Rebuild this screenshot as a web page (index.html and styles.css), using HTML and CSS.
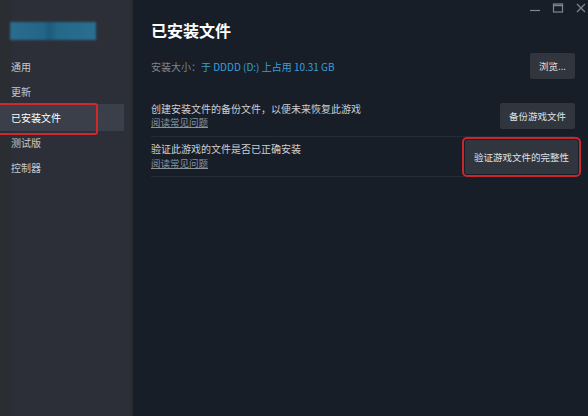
FILE: index.html
```html
<!DOCTYPE html>
<html lang="zh-CN">
<head>
<meta charset="utf-8">
<link rel="stylesheet" href="styles.css">
</head>
<body>
<div class="app">
  <aside class="sidebar">
    <div class="logo"></div>
    <nav class="nav">
      <div class="nav-item">通用</div>
      <div class="nav-item">更新</div>
      <div class="nav-item active">已安装文件</div>
      <div class="nav-item">测试版</div>
      <div class="nav-item">控制器</div>
    </nav>
  </aside>
  <main class="main">
    <div class="titlebar">
      <svg class="wc" width="12" height="12" viewBox="0 0 12 12"><path d="M1 8.5H11" stroke="#7f8690" stroke-width="1.2"/></svg>
      <svg class="wc" width="12" height="12" viewBox="0 0 12 12"><rect x="1.5" y="2" width="9" height="8" fill="none" stroke="#7f8690" stroke-width="1.2"/><path d="M1.5 3.5H10.5" stroke="#7f8690" stroke-width="1.4"/></svg>
      <svg class="wc" width="12" height="12" viewBox="0 0 12 12"><path d="M2 2L10 10M10 2L2 10" stroke="#7f8690" stroke-width="1.2"/></svg>
    </div>
    <h1 class="title">已安装文件</h1>
    <div class="size-row">
      <div class="size-text"><span class="label">安装大小：</span><span class="value">于 DDDD (D:) 上占用 10.31 GB</span></div>
      <button class="btn">浏览...</button>
    </div>
    <div class="row row-backup">
      <div class="row-text">
        <div class="desc">创建安装文件的备份文件，以便未来恢复此游戏</div>
        <div class="link">阅读常见问题</div>
      </div>
      <button class="btn">备份游戏文件</button>
    </div>
    <div class="row row-verify">
      <div class="row-text">
        <div class="desc">验证此游戏的文件是否已正确安装</div>
        <div class="link">阅读常见问题</div>
      </div>
      <button class="btn btn-big">验证游戏文件的完整性</button>
    </div>
  </main>
</div>
</body>
</html>
```
FILE: styles.css
```css
* { box-sizing: border-box; }
html, body { margin: 0; padding: 0; }
body {
  width: 588px;
  height: 416px;
  overflow: hidden;
  font-family: "Noto Sans CJK SC", "Noto Sans", sans-serif;
  background: #181e28;
}
.app {
  display: flex;
  width: 588px;
  height: 416px;
}
.sidebar {
  width: 133px;
  flex: none;
  background: linear-gradient(to right, #2a2d32 0, #2a2d32 12px, #2c2f38 12px, #2c2f38 131px, #262a31 131px);
  padding-top: 22px;
}
.logo {
  margin-left: 10px;
  width: 86px;
  height: 18px;
  background: linear-gradient(to right, #2a6d8e 0%, #226586 40%, #1c5a78 45%, #24688a 55%, #2a6f90 100%);
  filter: blur(0.8px);
}
.nav {
  margin-top: 14px;
  display: flex;
  flex-direction: column;
}
.nav-item {
  height: 25.3px;
  display: flex;
  align-items: center;
  padding-left: 11px;
  font-size: 10px;
  color: #c3c8ce;
  width: 124px;
}
.nav-item.active {
  position: relative;
  background: #3b3f49;
  color: #ffffff;
  height: 27px;
  margin: -1px 0;
}
.nav-item.active::after {
  content: "";
  position: absolute;
  left: -3px;
  top: -1px;
  width: 97px;
  height: 28px;
  border: 2px solid #d0282c;
  border-radius: 3px;
}
.main {
  flex: 1;
  padding: 0 13px 0 18px;
  display: flex;
  flex-direction: column;
}
.titlebar {
  height: 19px;
  margin-right: -13px;
  display: flex;
  justify-content: flex-end;
  align-items: flex-start;
  gap: 11px;
  padding-top: 2px;
  padding-right: 1px;
}
.wc { display: block; }
.title {
  margin: 0;
  font-size: 16px;
  line-height: 22px;
  font-weight: 700;
  color: #ffffff;
}
.size-row {
  margin-top: 12px;
  height: 26px;
  display: flex;
  align-items: center;
  justify-content: space-between;
}
.size-text { font-size: 10px; }
.label { color: #7c8691; }
.value { color: #3a9fdc; }
.btn {
  font-family: inherit;
  font-size: 9.5px;
  color: #dfe3e7;
  background: #31353e;
  border: none;
  border-radius: 2px;
  height: 26px;
  padding: 0 9px;
  cursor: pointer;
}
.btn-big {
  height: 34px;
  outline: 2px solid #c8282d;
  outline-offset: 1px;
  border-radius: 2px;
  margin-right: -3px;
}
.row {
  display: flex;
  align-items: center;
  justify-content: space-between;
  border-bottom: 1px solid #252b35;
}
.row-backup {
  margin-top: 17px;
  height: 41px;
}
.row-verify {
  height: 40px;
}
.row-text {
  display: flex;
  flex-direction: column;
}
.desc {
  font-size: 10px;
  line-height: 14.5px;
  color: #c9d0d7;
}
.link {
  font-size: 9.5px;
  line-height: 13.8px;
  color: #8a929b;
  text-decoration: underline;
  text-underline-offset: 1px;
}
```
